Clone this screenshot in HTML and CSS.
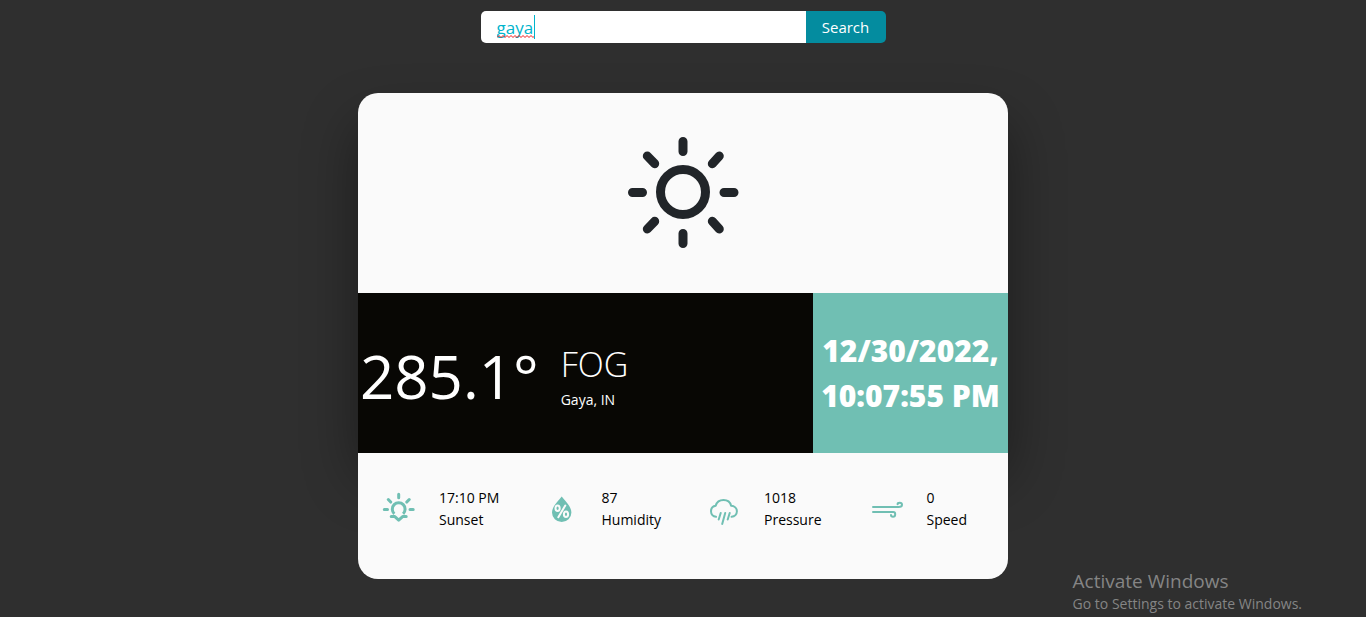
FILE: index.html
```html
<!DOCTYPE html>
<html lang="en">
<head>
<meta charset="utf-8">
<title>Weather</title>
<link rel="stylesheet" href="styles.css">
</head>
<body>
<form class="search">
  <div class="field">
    <input class="search-input" type="search" aria-label="City" value="gaya" spellcheck="false">
    <svg class="squiggle" viewBox="0 0 38 3" aria-hidden="true"><path d="M0 2.5 2 .5 4 2.5 6 .5 8 2.5 10 .5 12 2.5 14 .5 16 2.5 18 .5 20 2.5 22 .5 24 2.5 26 .5 28 2.5 30 .5 32 2.5 34 .5 36 2.5 38 .5"/></svg>
    <span class="caret"></span>
  </div>
  <button class="search-button" type="button">Search</button>
</form>

<main class="card">
  <div class="hero">
    <svg class="sun" viewBox="0 0 111 111" aria-hidden="true">
      <circle cx="55" cy="55" r="22.500"/>
      <path d="M55 4.500v10M55 96.500v10M4.500 55.500h10M96 55.500h10M19.300 19l7.400 7.700M91.300 19l-7 7.700M19.300 92l7.400-7.700M91.300 92l-7-7.700"/>
    </svg>
  </div>
  <section class="summary">
    <div class="current">
      <p class="temp">285.1°</p>
      <div class="place">
        <h1 class="condition">FOG</h1>
        <p class="city">Gaya, IN</p>
      </div>
    </div>
    <p class="date">12/30/2022, 10:07:55 PM</p>
  </section>
  <section class="details">
    <div class="detail">
      <svg class="icon" viewBox="0 0 40 40" aria-hidden="true"><path d="M19.700 6.300v3.500M5.300 21.500h3.200M31 21.500h3.200M9.300 11.500l2.400 2.600M30.200 11.500l-2.400 2.600M12.200 28.600h3.600l3.900 3.500 3.900-3.500h3.600"/><path class="disc" d="M15.300 25.800a6.400 6.400 0 1 1 8.800 0"/></svg>
      <p class="reading">17:10 PM<br>Sunset</p>
    </div>
    <div class="detail">
      <svg class="icon" viewBox="0 0 40 40" aria-hidden="true"><path class="solid" d="M19.700 8.500C17 12 10 18.500 10 24.500a9.700 9.500 0 0 0 19.400 0C29.400 18.500 22.500 12 19.700 8.500z"/><g class="percent"><ellipse cx="15.600" cy="20.300" rx="2.100" ry="2.800"/><ellipse cx="24" cy="26.300" rx="2.100" ry="2.800"/><path d="M23.300 17.500 16.300 29.200"/></g></svg>
      <p class="reading">87<br>Humidity</p>
    </div>
    <div class="detail">
      <svg class="icon thin" viewBox="0 0 40 40" aria-hidden="true"><path d="M12 28.800c-3-.3-5-2.700-5-5.500 0-3 2-5.200 4.700-5.600 1-3.400 4-5.700 7.800-5.700s6.800 2.300 7.600 5.700c3.300.2 5.800 2.500 5.800 5.600 0 2.900-2.200 5.200-5.300 5.500M16.700 25l-2 6.500M21.200 25l-3 11M25.700 25l-2 6.500"/></svg>
      <p class="reading">1018<br>Pressure</p>
    </div>
    <div class="detail">
      <svg class="icon thin" viewBox="0 0 40 40" aria-hidden="true"><path d="M6 19h25.500c2.200 0 3.500-.9 3.500-2.200s-1-2-2.300-2c-1.200 0-2.100.5-2.100 1.400M6 24h20.200c1.200 0 2 .9 2 2.200s-.9 2.500-2.200 2.500c-1.200 0-2-.6-2-1.600"/></svg>
      <p class="reading">0<br>Speed</p>
    </div>
  </section>
</main>

<aside class="watermark">
  <p class="watermark-title">Activate Windows</p>
  <p class="watermark-text">Go to Settings to activate Windows.</p>
</aside>
</body>
</html>
```
FILE: styles.css
```css
* { box-sizing: border-box; margin: 0; padding: 0; }

body {
  min-height: 100vh;
  padding: 11px 16px 38px;
  background: #2f2f2f;
  color: #000;
  font-family: "Segoe UI", "Open Sans", "Noto Sans", sans-serif;
  font-size: 14px;
}

.search {
  display: flex;
  width: 100%;
  max-width: 405px;
  height: 32px;
  margin: 0 auto 50px;
  border-radius: 5px;
  overflow: hidden;
}
.field { position: relative; flex: 1; display: flex; }
.search-input {
  width: 100%;
  padding: 0 16px;
  border: 0;
  outline: 0;
  appearance: none;
  background: #fff;
  color: #00b4cc;
  font: 17px "Open Sans", "Noto Sans", sans-serif;
}
.squiggle {
  position: absolute;
  left: 16px;
  top: 24px;
  width: 38px;
  height: 3px;
  fill: none;
  stroke: #f01818;
}
.caret {
  position: absolute;
  left: 53px;
  top: 4px;
  width: 1px;
  height: 24px;
  background: #00b4cc;
}
.search-button {
  width: 80px;
  border: 0;
  background: #048c9f;
  color: #fff;
  font: 15px "Open Sans", "Noto Sans", sans-serif;
}

.card {
  position: relative;
  width: 100%;
  max-width: 650px;
  margin: 0 auto;
}
.card::before {
  content: "";
  position: absolute;
  inset: 30px 0 100px;
  z-index: -1;
  border-radius: 20px;
  box-shadow: 0 0 54px rgba(0, 0, 0, 0.4);
}
.hero {
  display: flex;
  justify-content: center;
  padding: 44px 0 45px;
  border-radius: 20px 20px 0 0;
  background: #fafafa;
}
.sun {
  width: 111px;
  height: 111px;
  fill: none;
  stroke: #212529;
  stroke-width: 9;
  stroke-linecap: round;
}

.summary {
  display: grid;
  grid-template-columns: 7fr 3fr;
  min-height: 160px;
  color: #fff;
}
.current {
  display: flex;
  align-items: center;
  gap: 22px;
  padding: 6px 2px 0;
  background: #080704;
}
.temp { font-size: 60px; line-height: 80px; }
.place { padding-top: 4px; }
.condition { font-size: 34px; font-weight: 300; line-height: 44px; }
.city { line-height: 28px; }
.date {
  display: flex;
  align-items: center;
  padding: 0 4px;
  background: #70bfb3;
  font-size: 30px;
  font-weight: 800;
  line-height: 45px;
  text-align: center;
}

.details {
  display: grid;
  grid-template-columns: repeat(4, 1fr);
  padding: 33px 0 47px;
  border-radius: 0 0 20px 20px;
  background: #fafafa;
}
.detail {
  display: flex;
  gap: 20px;
  padding-left: 21px;
}
.icon {
  flex: none;
  width: 40px;
  height: 40px;
  margin-top: 2px;
  fill: none;
  stroke: #70bfb3;
  stroke-width: 3;
  stroke-linecap: round;
  stroke-linejoin: round;
}
.thin { stroke-width: 2; }
.disc { stroke-linecap: butt; }
.solid { fill: #70bfb3; stroke: none; }
.percent { stroke: #fafafa; stroke-width: 2; }
.reading { padding: 1px 0; line-height: 22px; }

.watermark {
  position: absolute;
  right: 64px;
  bottom: 2px;
  color: #858585;
}
.watermark-title { font-size: 19px; line-height: 24px; }
.watermark-text { font-size: 14px; line-height: 22px; }
```
